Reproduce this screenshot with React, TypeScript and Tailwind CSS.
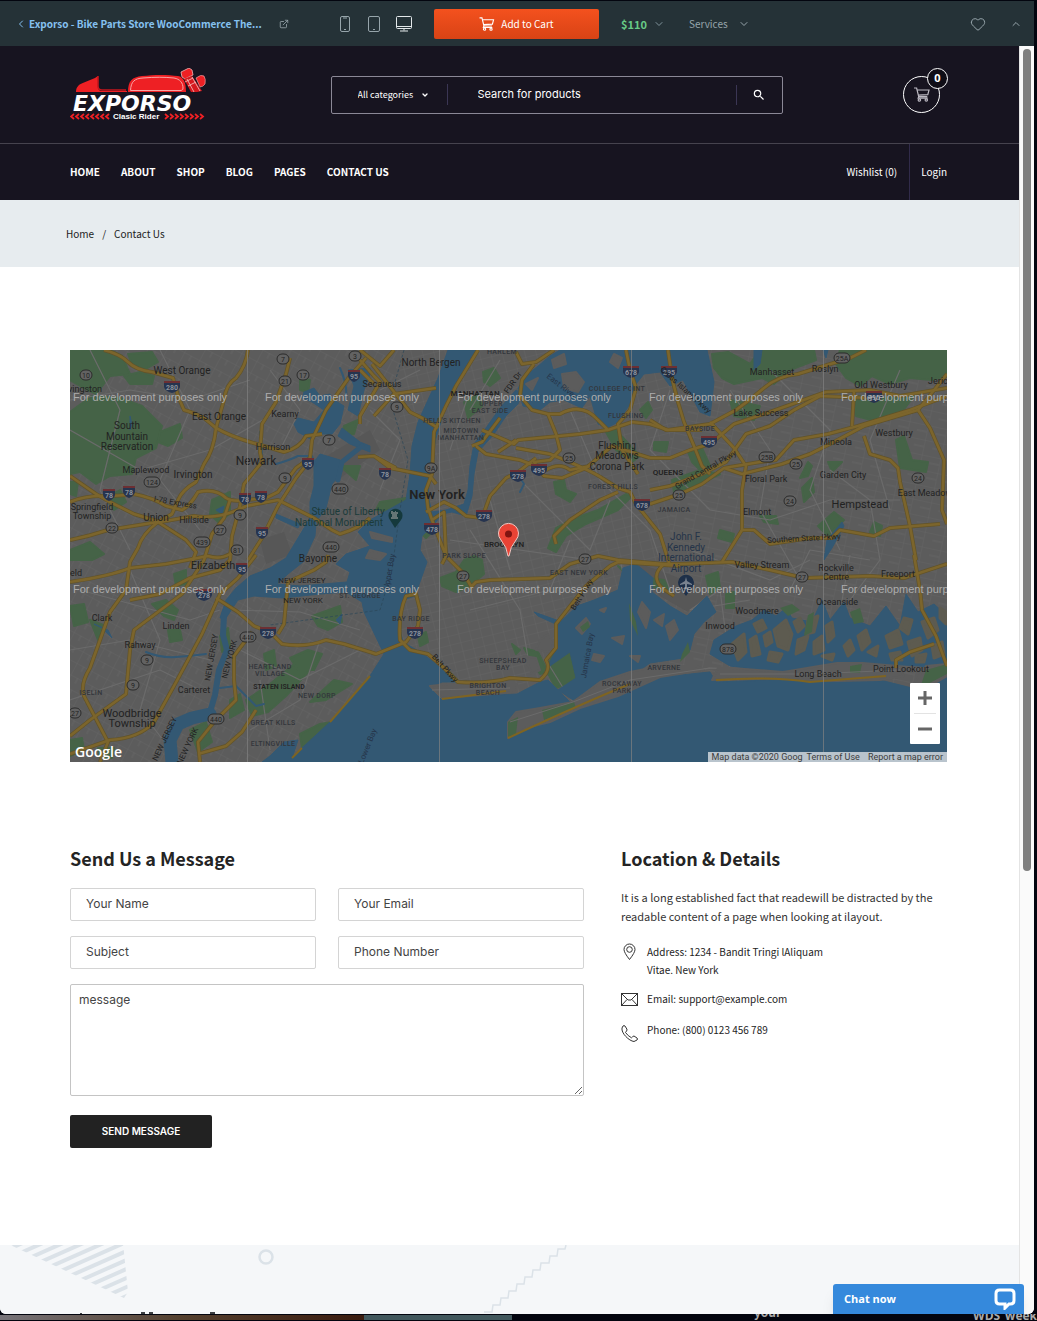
import React from "react";
import { ChevronDown, ChevronLeft, ChevronUp, ExternalLink, Heart } from "lucide-react";
import { MdSearch } from "react-icons/md";

/* ---------- icons ---------- */

function CartIcon({ className }: { className?: string }) {
  return (
    <svg viewBox="0 0 16 15" className={className} fill="none" stroke="currentColor" strokeWidth="1.2" aria-hidden="true">
      <path d="M0 1h2.6l2.1 8.6h8.6M3.1 3h11.9l-1.2 4.6-9.5.6M4.7 9.6l-.6 1.6h9.6" />
      <circle cx="5.4" cy="13" r="1.2" />
      <circle cx="12.3" cy="13" r="1.2" />
    </svg>
  );
}

function Logo() {
  return (
    <svg viewBox="0 0 136 53" className="h-[53px] w-[136px]" role="img" aria-label="Exporso Clasic Rider">
      <path d="M6 24c0-5 3-8 8-9.500L25 10l3-2v10c0 3 1 5 4 5h25v1z" fill="#ee2024" />
      <path d="M28 8v10c0 3 1 4 4 4h24" fill="none" stroke="#c4161c" strokeWidth="1.6" />
      <path d="M58 24c0-11 4-15 14-16 12-1.500 26-1.500 36 0 6 1 8 7 8 16z" fill="#ee2024" />
      <path d="M60.500 22.500c.5-9 4-12 12.500-12.500 11-1 22-1 31 0 6 1 9 5 9 10 0 2-1 2.500-3 2.500z" fill="none" stroke="#f8a5a5" strokeWidth="1" />
      <path d="M111 4l8-4 3 2 1 5-8 4-3-2z" fill="#ee2024" stroke="#f3b6b6" strokeWidth=".8" />
      <path d="M114 11l8-3 10 15-5 1h-6z" fill="#d4191f" />
      <path d="M115 14l8-4M118 18l8-4M117 11l7 13M122 9l8 14" stroke="#f6c4c4" strokeWidth=".8" />
      <path d="M126 10q5-4 8-2 2 3 1 8-2 3-5 3z" fill="#ee2024" stroke="#f3b6b6" strokeWidth=".6" />
      <text x="3" y="43" fill="#fff" fontFamily="DejaVu Sans, sans-serif" fontWeight="700" fontStyle="italic" fontSize="22">EXPORSO</text>
      <g fill="none" stroke="#ee2024" strokeWidth="1.8">
        {[0, 5, 10, 15, 20, 25, 30, 35].map((x) => (
          <path key={x} d={`M${x + 4} 46l-3 2.500 3 2.500`} />
        ))}
        {[95, 100, 105, 110, 115, 120, 125, 130].map((x) => (
          <path key={x} d={`M${x} 46l3 2.500-3 2.500`} />
        ))}
      </g>
      <text x="43" y="51" fill="#fff" fontFamily="Liberation Sans, sans-serif" fontWeight="700" fontSize="8">Clasic Rider</text>
    </svg>
  );
}

/* ---------- map ---------- */

const greens = [
  "0,0 40,0 52,6 60,24 40,26 26,44 10,36 0,30",
  "0,62 22,46 50,48 72,56 92,76 86,98 66,108 62,124 40,126 26,134 10,122 0,124",
  "58,4 82,2 88,12 74,20 62,14", "70,22 84,26 82,34 60,34 54,26",
  "90,82 110,74 112,88 98,96 88,92", "0,200 20,192 34,204 22,210 0,210",
  "36,148 50,140 56,152 44,160", "142,150 160,142 160,164 148,172 140,164",
  "274,76 288,70 284,84 272,86", "270,116 290,116 286,130",
  "413,22 424,18 430,28 420,36 414,32", "394,52 408,44 412,56 398,68",
  "310,152 336,148 330,162 306,160", "345,178 356,172 364,180 356,188",
  "478,198 486,178 500,170 528,160 556,144 562,146 548,160 516,174 496,186 486,202",
  "536,82 544,78 570,106 562,112 546,100", "570,60 578,52 582,60 576,68",
  "484,132 494,130 496,140 506,144 500,152 486,144",
  "370,228 386,222 394,210 404,206 412,210 414,224 400,236 386,242 372,236",
  "642,4 658,2 680,14 690,0 744,0 746,10 720,20 704,34 692,28 664,34 652,28 644,18",
  "770,0 877,0 877,26 862,30 840,28 820,34 802,26 790,36 776,28 766,14",
  "784,46 812,48 844,46 832,62 808,72 786,66", "618,102 632,98 640,116 634,124 622,112",
  "602,130 630,120 650,124 622,138 604,142", "826,90 834,86 842,110 858,112 856,122 830,118",
  "732,138 742,128 744,142 734,152", "758,112 772,112 762,122", "584,92 598,92 596,102 584,100",
  "650,180 664,184 662,192 648,188", "690,166 706,166 708,174 694,172",
  "748,176 764,162 774,170 758,186", "804,172 812,176 810,186 800,182",
  "636,226 648,222 650,238 640,244", "656,244 664,242 664,258 656,258",
  "483,305 500,300 507,330 486,338 476,320", "348,286 356,282 358,292 350,296",
  "442,294 450,300 446,304", "454,298 468,302 478,322 470,324",
  "82,254 96,250 108,260 104,270 94,266", "150,286 158,278 160,296 152,302",
  "194,304 204,300 206,316 196,320", "200,334 234,306 242,318 216,346 198,362 182,366 176,350",
  "220,308 238,300 252,304 244,320 228,320", "230,384 250,374 262,372 232,398",
  "242,266 270,256 272,272 258,280 248,276", "240,352 264,330 282,334 256,350",
  "160,350 170,344 174,360 160,368", "104,224 116,220 116,234 106,236",
  "20,270 36,276 28,290", "98,280 110,280 112,290 100,292", "120,380 136,372 142,392 128,402",
  "0,256 14,254 18,272 4,276", "0,390 12,388 14,400 0,406", "28,398 44,398 42,408 30,408",
  "548,216 566,234 600,240 594,230 562,226", "660,50 690,56 684,70 664,66", "730,128 738,112 742,116 738,126", "0,132 8,132 6,146 0,144", "230,28 240,30 238,42 230,40",
];

const waters = [
  // Hudson, upper bay, lower bay and the Atlantic
  "378,0 368,28 358,50 348,72 342,96 340,124 336,150 318,160 300,170 288,182 300,196 276,204 266,214 280,222 277,232 230,236 207,234 218,224 233,212 245,186 246,172 256,158 262,134 272,122 270,110 250,104 244,112 244,136 240,152 240,168 228,188 216,208 200,218 180,226 166,238 156,250 150,268 156,268 168,250 184,246 213,248 250,244 276,242 292,252 294,262 314,304 300,326 260,372 232,398 222,408 228,390 214,392 200,406 192,412 877,412 877,322 850,340 810,330 760,332 700,330 646,332 640,322 580,328 510,358 500,352 486,338 478,330 470,332 447,344 400,346 372,350 360,338 372,332 387,332 372,318 350,302 333,292 328,272 333,250 345,246 357,212 350,200 352,186 366,172 372,164 382,162 396,166 402,146 404,124 408,102 424,84 436,66 448,54 452,44 446,40 430,58 416,78 404,94 400,116 398,140 394,154 376,160 362,162 358,146 360,120 366,88 374,62 388,34 400,10 408,0",
  // upper East River
  "453,56 448,38 458,24 467,17 480,6 490,0 637,0 644,32 640,66 630,62 613,30 600,36 590,22 574,24 566,34 560,54 548,72 537,78 528,74 520,46 512,58 494,50 480,52 470,60",
  // Jamaica Bay
  "477,318 486,300 487,275 507,256 524,250 548,240 553,218 566,214 583,228 582,242 600,256 617,266 637,246 646,262 634,272 624,284 620,300 613,308 580,313 562,326 523,338 503,350 488,340 506,328 500,302",
  // South Shore channels
  "660,316 640,304 644,290 666,276 682,270 694,260 706,266 716,258 722,268 742,272 752,250 760,270 774,252 780,268 800,276 816,256 830,276 836,244 848,262 864,254 877,266 877,322 850,316 800,313 700,322",
  "234,42 244,38 250,46 260,44 264,50 274,56 270,74 262,84 248,84 242,90 228,82 224,74 228,68 244,72 254,60 242,52 232,48",
  "278,20 284,36 278,60 288,66 294,40 300,24 300,18", "272,78 290,92 300,96 300,102 280,94 268,86",
  "684,0 692,0 690,14 684,20", "753,0 758,0 756,8", "60,66 62,74 60,80", "146,160 154,156 152,164",
  "206,164 230,174 228,178 206,168", "24,274 32,278 42,288 38,280", "757,190 772,172 774,176 762,198 754,210", "464,262 492,272 490,276 468,266",
  "266,270 272,264 270,274",
];

const lands = [
  "438,388 438,372 446,362 470,358 503,352 530,332 560,322 590,316 626,316 634,320 590,327 548,346 510,358 480,372 456,378",
  "642,330 648,318 662,318 713,322 767,313 793,313 827,316 834,326 810,330 767,331 723,329 668,328",
  "856,316 877,314 877,326 860,336 842,344 842,336",
  "360,336 378,334 412,334 447,334 446,342 400,346 373,348",
  "492,24 506,22 514,32 508,42 494,38", "544,4 552,8 548,18 540,12", "456,34 468,28 462,40", "482,10 494,4 496,14 484,18",
  "506,278 516,268 520,274 512,284", "524,304 534,306 530,312 522,310", "542,288 554,286 552,294", "560,306 570,306 568,312", "530,260 536,258 534,262", "596,276 604,270 608,280 600,290", "470,290 478,284 484,292 480,302 466,300", "454,306 466,308 470,320 462,324",
  "572,252 580,262 576,278 568,262", "584,270 594,264 592,276",
  "300,182 322,188 322,192 302,188", "300,200 316,204 310,210 296,208",
];

const marsh = [
  "704,280 716,270 722,284 718,300 708,296", "694,286 700,282 702,292 696,296", "724,272 730,268 734,276 728,282", "728,290 738,286 734,300 726,304",
  "738,270 748,266 744,282 736,284", "744,292 752,286 754,300 744,304", "756,276 762,272 764,286 758,292", "774,296 780,290 784,300 778,306",
  "788,286 796,280 800,292 792,300", "798,302 808,296 806,306", "816,286 828,280 832,294 820,298", "834,268 842,270 838,284 830,278",
  "838,292 850,288 852,300 842,306", "852,272 864,268 868,280 858,288", "862,296 872,292 874,304 864,308", "846,306 856,304 854,312 846,312",
  "820,304 830,302 832,310 822,310", "680,290 686,286 690,304 682,306", "752,306 764,304 762,310", "700,302 712,304 708,312 698,310", "870,258 876,262 876,274 870,268",
  "662,294 674,284 676,302 668,310", "684,274 692,270 696,278 688,282",
];

const highways = [
  "M34 0Q50 4 58 12T82 22L103 28L108 46L114 60Q122 62 134 68L146 78Q160 86 180 92L214 102Q230 98 236 86L252 84",
  "M178 0Q176 16 166 28Q156 34 154 50L146 78Q144 100 134 114L126 132Q112 140 108 150L102 164L88 172Q72 184 68 198L60 212L56 240L40 262Q30 290 20 318Q10 334 14 346L38 392L30 412",
  "M0 152Q14 146 32 146T64 144Q84 148 96 156L112 160Q120 156 128 142Q146 138 156 148Q162 152 176 150L196 148L208 142L226 118L240 108L242 90L256 60L280 26L296 8",
  "M0 126L26 144L40 152L64 164L90 172L124 166Q150 170 176 156L208 150L244 168L262 180L270 184Q290 178 300 168",
  "M0 190Q20 186 38 180L88 172L116 190L126 202L120 218",
  "M178 210L192 188L208 156L226 128L240 110",
  "M160 150L154 168L142 184L134 210L112 244L64 280L60 300L56 344L20 370L0 386",
  "M186 205L168 228L150 244L132 284L104 336L84 372Q70 388 40 390L0 404",
  "M220 8L216 24L206 52L192 74L190 102L192 112L174 134L170 156L162 186L160 210L150 220L120 228L90 244L60 250",
  "M0 232Q40 226 60 218L96 214L138 206Q150 210 160 204",
  "M146 248L168 262L184 276L200 282L212 294Q236 298 256 290L274 294L300 302L306 304L336 292L348 276L350 260L346 244L336 246Q328 264 330 290L340 300L358 304L374 318L388 332Q420 334 440 328L470 330Q482 320 476 310L486 298L486 274L516 236L540 216L548 212L610 216",
  "M258 205L256 212L244 220L218 232L214 274L208 284",
  "M182 282L164 306L164 330L166 350L144 372L128 392L130 412M128 404L156 396L172 382L186 360",
  "M290 10L304 26L310 32L290 66L290 74M302 14L340 62L352 68L368 78M290 0L310 16L324 0",
  "M408 0L386 36L376 56L364 82L362 124L356 140L358 158L362 170L376 206L372 214M356 162L374 152L386 158L396 166L412 168L420 146L436 128L448 122L466 108M362 170L374 162L376 206",
  "M446 2L452 14L466 12L484 0M464 14L452 30L450 46L462 60L478 64L490 64Q512 52 528 70L538 80L562 72L580 74L598 80L640 74L666 60Q680 50 694 38T728 24L780 8L796 0",
  "M288 107L304 106L320 118L360 126L366 134M304 106L326 118M304 66L324 44L366 38",
  "M402 96L412 92L430 68M406 96L416 104L450 110L476 120Q490 112 500 120L520 116M412 80L444 94L448 90L510 84L538 80M428 102L446 90M446 98L480 104Q520 120 532 128L548 138L560 142L566 154L590 184L600 216",
  "M478 64L486 84L490 100L480 110L464 112L474 126L492 128L516 118L542 96L580 108",
  "M548 142L530 150L500 170L484 186L486 194",
  "M580 108L600 108L620 100L640 94L664 74L700 62L756 42L800 40L830 46L877 38",
  "M598 0L602 28L608 52L614 72L624 96L632 116L640 124",
  "M640 72L664 98L676 116L672 140L672 180L652 212",
  "M580 140L600 136L632 124L656 112L676 84L700 76L724 60L750 46L800 48M580 154L610 144L632 134L654 118L690 112L706 110L724 90L758 84L788 76L840 60L877 46",
  "M654 118L672 124L712 114L740 104L760 94L794 76L848 60L877 24M784 42L782 76M794 86L800 104L820 110L828 118L830 132L840 176L846 210",
  "M672 180L684 180L700 194L740 188L762 188L770 180L804 186L820 178L870 174M848 60L860 78L874 110L872 160L877 174",
  "M400 238L406 232L420 230L480 228L500 214L528 206L548 210L594 214M378 208L394 224L402 238M594 214Q580 226 592 238L604 246M580 214L610 214L662 212L700 220L734 228L800 226L834 228L877 214",
  "M844 205L850 240L852 260L866 286L877 316M864 294L840 302L826 310L826 318",
  "M556 0L560 20L566 38L560 60L548 74L552 100L568 124M290 20L304 34",
  "M580 70L596 80L632 80",
];

const shore = [
  "M438 388Q520 350 560 334", "M646 330Q700 326 740 332Q790 328 816 326", "M260 372L300 326", "M222 408L232 398", "M372 349L436 341", "M842 345L860 334",
];

const streets = [
  "M0 80L70 120L140 100L210 60M20 0L50 60L30 140L60 200M90 0L120 60L90 130L130 180M200 20L230 60L210 100M0 50L60 40L120 50L180 30",
  "M60 220L90 290L70 360L110 412M0 300L60 290L140 310M10 240L120 270L150 260M0 350L90 320L130 340",
  "M170 300L230 330L290 300M180 380L230 350L250 290M190 330L200 400M160 260L230 262L290 280",
  "M300 60L330 90L310 140M310 40L350 20M400 60L430 10M380 100L400 40",
  "M400 180L450 260L460 320M380 190L520 210M400 260L480 240L500 190M420 150L440 220M450 130L520 200L540 150M500 60L530 130L580 180L600 240",
  "M600 40L580 100L640 160M660 40L700 100L690 160L730 230M700 20L760 80L740 140L770 200M620 200L700 230L740 210",
  "M640 160L700 170L760 150L830 150M760 120L800 150L810 210L780 250M830 20L800 90L820 160M720 240L740 200L800 210M680 250L620 260L650 240L660 317M753 315L770 262L780 205",
  "M551 214L560 252L568 286L572 322M476 310L492 336L503 352M440 372L503 352L560 330L640 318L740 322L830 318",
];

type Label = [x: number, y: number, text: string, size: number, kind?: "area" | "bold" | "blue" | "teal", rotate?: number];

const labels: Label[] = [
  [112, 24, "West Orange", 10], [15, 42, "vingston", 9], [149, 70, "East Orange", 10], [57, 79, "South", 10], [57, 90, "Mountain", 10], [57, 100, "Reservation", 10],
  [76, 123, "Maplewood", 9], [123, 128, "Irvington", 10], [22, 160, "Springfield", 9], [22, 169, "Township", 9], [86, 171, "Union", 10], [124, 173, "Hillside", 9],
  [105, 155, "I-78 Express", 8, undefined, 10], [215, 67, "Kearny", 9], [203, 100, "Harrison", 9], [186, 115, "Newark", 12], [312, 37, "Secaucus", 9], [361, 16, "North Bergen", 10],
  [278, 165, "Statue of Liberty", 10, "teal"], [269, 176, "National Monument", 10, "teal"], [248, 212, "Bayonne", 10], [143, 219, "Elizabeth", 11], [5, 226, "ield", 9],
  [32, 271, "Clark", 9], [106, 279, "Linden", 9], [70, 298, "Rahway", 9], [124, 343, "Carteret", 9], [62, 367, "Woodbridge", 11], [62, 377, "Township", 11],
  [21, 345, "ISELIN", 7, "area"], [144, 308, "NEW JERSEY", 8, undefined, -80], [162, 310, "NEW YORK", 8, undefined, -75], [97, 390, "NEW JERSEY", 8, undefined, -65], [120, 397, "NEW YORK", 8, undefined, -65],
  [232, 233, "NEW JERSEY", 8], [233, 253, "NEW YORK", 8], [290, 248, "ST. GEORGE", 7, "area"], [200, 319, "HEARTLAND", 7, "area"], [200, 326, "VILLAGE", 7, "area"],
  [209, 339, "STATEN ISLAND", 7, "bold"], [247, 348, "NEW DORP", 7, "area"], [203, 375, "GREAT KILLS", 7, "area"], [203, 396, "ELTINGVILLE", 7, "area"],
  [367, 149, "New York", 13, "bold"], [405, 46, "MANHATTAN", 8, "bold"], [421, 56, "UPPER", 7, "area"], [420, 63, "EAST SIDE", 7, "area"], [432, 4, "HARLEM", 7, "area"],
  [382, 73, "HELL'S KITCHEN", 7, "area"], [391, 83, "MIDTOWN", 7, "area"], [391, 90, "MANHATTAN", 7, "area"], [445, 34, "FDR Dr", 8, undefined, -55], [490, 38, "East River", 8, "blue", 38],
  [434, 197, "BROOKLYN", 8, "bold"], [394, 208, "PARK SLOPE", 7, "area"], [509, 225, "EAST NEW YORK", 7, "area"], [341, 271, "BAY RIDGE", 7, "area"], [433, 313, "SHEEPSHEAD", 7, "area"], [433, 320, "BAY", 7, "area"],
  [418, 338, "BRIGHTON", 7, "area"], [418, 345, "BEACH", 7, "area"], [552, 336, "ROCKAWAY", 7, "area"], [552, 343, "PARK", 7, "area"], [594, 320, "ARVERNE", 7, "area"],
  [373, 320, "Belt Pkwy", 8, undefined, 48], [514, 246, "Belt Pkwy", 8, undefined, -58], [520, 306, "Jamaica Bay", 8, "blue", -80], [322, 222, "Upper Bay", 8, "blue", -80], [300, 397, "Lower Bay", 8, "blue", -68],
  [547, 41, "COLLEGE POINT", 7, "area"], [556, 68, "FLUSHING", 7, "area"], [547, 99, "Flushing", 10], [547, 109, "Meadows", 10], [547, 120, "Corona Park", 10], [543, 139, "FOREST HILLS", 7, "area"],
  [598, 125, "QUEENS", 8, "bold"], [604, 162, "JAMAICA", 7, "area"], [630, 81, "BAYSIDE", 7, "area"], [702, 25, "Manhasset", 9], [755, 22, "Roslyn", 9], [811, 38, "Old Westbury", 9], [873, 34, "Jericho", 9],
  [691, 66, "Lake Success", 9], [824, 86, "Westbury", 9], [766, 95, "Mineola", 9], [696, 132, "Floral Park", 9], [773, 128, "Garden City", 9], [687, 165, "Elmont", 9], [790, 158, "Hempstead", 11], [855, 146, "East Meadow", 9],
  [637, 122, "Grand Central Pkwy", 8, undefined, -30], [614, 42, "Cross Island Pkwy", 8, undefined, 42], [734, 191, "Southern State Pkwy", 8, undefined, -3],
  [616, 190, "John F.", 10, "blue"], [616, 201, "Kennedy", 10, "blue"], [616, 211, "International", 10, "blue"], [616, 222, "Airport", 10, "blue"],
  [692, 218, "Valley Stream", 9], [766, 221, "Rockville", 9], [766, 230, "Centre", 9], [828, 227, "Freeport", 9], [767, 255, "Oceanside", 9], [687, 264, "Woodmere", 9], [650, 279, "Inwood", 9], [748, 327, "Long Beach", 9], [831, 322, "Point Lookout", 9],
];

const routes: [number, number, string][] = [
  [16, 25, "10"], [213, 9, "7"], [285, 6, "3"], [233, 25, "17"], [215, 31, "21"], [259, 90, "7"], [82, 132, "124"], [215, 128, "9"], [270, 139, "440"], [42, 178, "22"], [170, 165, "9"], [150, 180, "27"], [132, 192, "439"], [167, 200, "81"],
  [261, 197, "440"], [327, 57, "9"], [361, 118, "9A"], [499, 108, "25"], [515, 209, "27"], [393, 226, "27"], [772, 8, "25A"], [697, 107, "25B"], [726, 114, "25"], [609, 145, "25"], [720, 151, "24"], [848, 128, "24"], [732, 227, "27"],
  [658, 299, "878"], [77, 310, "9"], [63, 335, "9"], [5, 363, "27"], [146, 369, "440"], [178, 287, "440"],
];

const interstates: [number, number, string][] = [
  [102, 36, "280"], [284, 25, "95"], [238, 113, "95"], [39, 144, "78"], [59, 141, "78"], [175, 148, "78"], [191, 146, "78"], [192, 182, "95"], [315, 123, "78"], [362, 178, "478"], [414, 165, "278"], [448, 125, "278"], [469, 119, "495"],
  [561, 21, "678"], [572, 154, "678"], [599, 21, "295"], [639, 91, "495"], [804, 46, "495"], [172, 218, "95"], [134, 244, "278"], [198, 282, "278"], [345, 282, "278"],
];

function labelColor(kind: Label[4]) {
  if (kind === "area") return "#33363b";
  if (kind === "blue") return "#253449";
  if (kind === "teal") return "#1b3b3a";
  return "#222";
}

function MapDrawing() {
  return (
    <svg viewBox="0 0 877 412" preserveAspectRatio="xMidYMid slice" className="block h-full w-full" role="img" aria-label="Map of New York" fontFamily="Roboto, sans-serif">
      <defs>
        <pattern id="gridA" width="17" height="13" patternUnits="userSpaceOnUse" patternTransform="rotate(28)">
          <path d="M0 0H17M0 0V13M8 0V6" stroke="#666" strokeWidth="0.8" fill="none" />
        </pattern>
        <pattern id="gridB" width="11" height="9" patternUnits="userSpaceOnUse" patternTransform="rotate(-14)">
          <path d="M0 0H11M0 0V9" stroke="#666" strokeWidth="0.8" fill="none" />
        </pattern>
        <pattern id="gridC" width="19" height="15" patternUnits="userSpaceOnUse" patternTransform="rotate(12)">
          <path d="M0 0H19M0 0V15M9 7H19" stroke="#666" strokeWidth="0.8" fill="none" />
        </pattern>
      </defs>
      <rect width="877" height="412" fill="#5c5c5c" />
      <rect width="330" height="412" fill="url(#gridA)" />
      <rect x="330" width="270" height="412" fill="url(#gridB)" />
      <rect x="600" width="277" height="412" fill="url(#gridC)" />
      <path d="M240 116L300 80L310 100L262 134ZM190 190L214 182L222 204L196 214ZM566 212L620 232L636 246L618 262L590 246Z" fill="#575757" />
      <g fill="#456347" stroke="#456347" strokeWidth="2" strokeLinejoin="round">{greens.map((p) => <polygon key={p} points={p} />)}</g>
      <g fill="none" stroke="#6b6b6b" strokeWidth="1.2" strokeLinejoin="round">{streets.map((d) => <path key={d} d={d} />)}</g>
      <g fill="#335873" stroke="#335873" strokeLinejoin="round">{waters.map((p) => <polygon key={p} points={p} />)}</g>
      <g fill="none" stroke="#335873" strokeLinejoin="round" strokeLinecap="round">
        <path d="M165 245L154 265L153 285L157 300L149 320L145 345L140 362" strokeWidth="6" />
        <path d="M140 364L122 368L108 374L100 390L102 412" strokeWidth="13" />
        <path d="M76 302Q90 308 106 307T136 304M150 338L166 336L178 348L186 356L194 354M192 104L190 82M206 114Q220 110 228 106L242 106L246 116M270 18Q278 36 276 50M446 122L454 134L450 142" strokeWidth="2" />
        <path d="M292 96L272 112L268 130" strokeWidth="5" />
      </g>
      <g fill="#5c5c5c" stroke="#5c5c5c" strokeWidth="2" strokeLinejoin="round">{lands.map((p) => <polygon key={p} points={p} />)}</g>
      <g fill="#5d5b50" stroke="#5d5b50" strokeWidth="3" strokeLinejoin="round">{marsh.map((p) => <polygon key={p} points={p} />)}</g>
      <path d="M438 388L438 372L448 367L446 384ZM472 360L504 352L506 358L474 370ZM510 277L518 271L520 277L513 282ZM559 253L566 272L568 286L560 270ZM612 304L618 292L620 302L610 312ZM780 316L792 314L790 323L780 323ZM856 320L877 314L877 324L850 338ZM710 258L722 254L730 260L718 266ZM738 265L744 262L742 282L734 286ZM780 262L790 258L794 272L784 274Z" fill="#456347" />
      <path d="M334 0L320 50L338 110L330 160L322 220L310 260L200 275" fill="none" stroke="#2b4658" strokeWidth="0.7" strokeDasharray="3 2" />
      <path d="M440 372L503 352L560 330L640 318M650 324L740 324L830 320M362 340L440 338" fill="none" stroke="#6b6b6b" />
      <g fill="none" stroke="#7e6422" strokeWidth="2">{shore.map((d) => <path key={d} d={d} />)}</g>
      <g fill="none" stroke="#625329" strokeWidth="4" strokeLinejoin="round">{highways.map((d) => <path key={d} d={d} />)}</g>
      <g fill="none" stroke="#7c652c" strokeWidth="2.6" strokeLinejoin="round">{highways.map((d) => <path key={d} d={d} />)}</g>

      {routes.map(([x, y, t]) => (
        <g key={`${x}-${y}`}>
          <rect x={x - (t.length > 2 ? 8 : 6)} y={y - 5} width={t.length > 2 ? 16 : 12} height="10" rx="5" fill="#626262" stroke="#2b2b2b" />
          <text x={x} y={y + 3} fontSize="7" textAnchor="middle" fill="#222">{t}</text>
        </g>
      ))}
      {interstates.map(([x, y, t]) => {
        const w = t.length > 2 ? 8 : 6;
        return (
          <g key={`${x}-${y}`}>
            <path d={`M${x - w} ${y - 5}H${x + w}V${y + 1}Q${x + w - 1} ${y + 5} ${x} ${y + 7}Q${x - w + 1} ${y + 5} ${x - w} ${y + 1}Z`} fill="#26344f" />
            <path d={`M${x - w} ${y - 5}H${x + w}V${y - 3}H${x - w}Z`} fill="#6c2f33" />
            <text x={x} y={y + 4} fontSize="7" fontWeight="700" textAnchor="middle" fill="#8c929c">{t}</text>
          </g>
        );
      })}
      {labels.map(([x, y, t, size, kind, rotate]) => (
        <text
          key={`${t}-${x}-${y}`}
          x={x}
          y={y}
          fontSize={size}
          textAnchor="middle"
          fontWeight={kind === "bold" ? 600 : kind === "area" ? 500 : 400}
          fill={labelColor(kind)}
          transform={rotate ? `rotate(${rotate} ${x} ${y})` : undefined}
          className={kind === "area" ? "tracking-wider" : undefined}
        >
          {t}
        </text>
      ))}

      <path d="M325 178L320 170A7 7 0 1 1 331 170Z" fill="#15393c" />
      <path d="M322 161h1v1h2v-1h1v1h2v-1v3h-1v3h1v2h-7v-2h1v-3h-1v-3z" fill="#657575" />
      <path d="M616 246L610 238A8 8 0 1 1 622 238Z" fill="#1e3049" />
      <path d="M616 227l1 4 5 3v1l-5-1v3l2 2h-6l2-2v-3l-5 1v-1l5-3z" fill="#79828f" />

      <g fill="#828282">
        {[177, 369, 561, 753].map((x) => <rect key={x} x={x} width="1" height="412" fillOpacity="0.7" />)}
      </g>
      <g fontFamily="Liberation Sans, sans-serif" fontSize="11" fill="#adadad">
        {[3, 195, 387, 579, 771].map((x) => (
          <React.Fragment key={x}>
            <text x={x} y="51">For development purposes only</text>
            <text x={x} y="243">For development purposes only</text>
          </React.Fragment>
        ))}
      </g>
      <path d="M438 206Q437 197 431 190A10 10 0 1 1 446 190Q440 197 439 206Z" fill="#ea4335" stroke="#f6c7c1" strokeWidth="1" />
      <circle cx="438.500" cy="184" r="3.500" fill="#811411" />
    </svg>
  );
}

function MapPanel() {
  return (
    <section className="relative h-[412px] overflow-hidden" aria-label="Store location">
      <MapDrawing />
      <span className="absolute bottom-0 left-[5px] font-['Open_Sans',sans-serif] text-[14px] font-semibold leading-5 text-white">Google</span>
      <div className="absolute bottom-[18px] right-[7px] flex w-[30px] flex-col items-center rounded-[1px] bg-white">
        <button aria-label="Zoom in" className="flex h-[30px] w-full items-center justify-center">
          <svg viewBox="0 0 14 14" className="size-3.5"><path d="M7 0V14M0 7H14" stroke="#666" strokeWidth="3" /></svg>
        </button>
        <span className="h-px w-[22px] bg-[#e3e3e3]" />
        <button aria-label="Zoom out" className="flex h-[30px] w-full items-center justify-center">
          <svg viewBox="0 0 14 14" className="size-3.5"><path d="M0 7H14" stroke="#666" strokeWidth="3" /></svg>
        </button>
      </div>
      <div className="absolute bottom-0 right-0 flex h-[10px] items-center gap-1 overflow-hidden bg-[#b9c4cd] px-1 font-[Roboto,sans-serif] text-[9px] leading-[10px] text-[#3c3c3c]">
        <span>Map data ©2020 Goog</span>
        <a href="#terms">Terms of Use</a>
        <a href="#report" className="ml-1">Report a map error</a>
      </div>
    </section>
  );
}

/* ---------- page parts ---------- */

function PreviewBar() {
  return (
    <div className="flex h-[45px] items-center bg-[#253237] pl-[17px] pr-3 text-[10px] leading-4 text-[#97a5ab]">
      <a href="#back" className="flex w-[254px] items-center font-bold text-[#85c1f0]">
        <ChevronLeft className="-ml-0.5 mr-0.5 size-3 shrink-0" strokeWidth={2} />
        <span className="whitespace-nowrap">Exporso - Bike Parts Store WooCommerce The...</span>
      </a>
      <a href="#open" aria-label="Open in new window" className="ml-2"><ExternalLink className="size-[10px]" /></a>
      <div className="ml-[51px] flex items-center gap-[18px]">
        <button aria-label="Phone preview">
          <svg viewBox="0 0 10 16" className="block h-4 w-[10px]" fill="none" stroke="currentColor"><rect x=".5" y=".5" width="9" height="15" rx="1.500" /><path d="M3 2h4M4 13.500h2" /></svg>
        </button>
        <button aria-label="Tablet preview">
          <svg viewBox="0 0 12 16" className="block h-4 w-3" fill="none" stroke="currentColor"><rect x=".5" y=".5" width="11" height="15" rx="1.500" /><path d="M5 13.500h2" /></svg>
        </button>
        <button aria-label="Desktop preview" className="-ml-0.5 text-[#e3e8ea]">
          <svg viewBox="0 0 16 16" className="block size-4" fill="none" stroke="currentColor"><rect x=".5" y=".5" width="15" height="12" rx="1" /><path d="M1 10.500h14M8 12.500v2M4 15h8" /></svg>
        </button>
      </div>
      <button className="ml-[22px] flex h-[30px] w-[165px] items-center justify-center gap-1.5 rounded-[2px] bg-linear-to-b from-[#f4511e] to-[#d84315] text-white">
        <CartIcon className="h-[14px] w-4" />
        <span className="whitespace-nowrap">Add to Cart</span>
      </button>
      <button className="ml-[22px] flex items-center gap-1.5 text-[11px] font-bold text-[#68ca86]">
        $110 <ChevronDown className="size-3 text-[#81949c]" />
      </button>
      <button className="ml-6 flex items-center gap-2.5">
        Services <ChevronDown className="size-3" />
      </button>
      <div className="ml-auto flex items-center gap-6">
        <button aria-label="Add to favourites"><Heart className="block size-4" strokeWidth={1.5} /></button>
        <button aria-label="Collapse bar"><ChevronUp className="block size-3" /></button>
      </div>
    </div>
  );
}

function SiteHeader() {
  const links = ["HOME", "ABOUT", "SHOP", "BLOG", "PAGES", "CONTACT US"];
  return (
    <header className="bg-[#171420] text-white">
      <div className="flex h-[97px] items-center justify-between pl-[70px] pr-[71px]">
        <a href="#home" className="shrink-0"><Logo /></a>
        <form className="ml-1 flex h-[38px] w-[452px] items-center rounded-[2px] border border-[#8b8896]" role="search" onSubmit={(e) => e.preventDefault()}>
          <div className="flex h-[21px] w-[116px] items-center border-r border-[#3b3654] pl-[26px]">
            <select aria-label="Category" className="w-[63px] appearance-none bg-transparent text-[9px] leading-4 outline-none">
              <option>All categories</option>
            </select>
            <ChevronDown className="size-2" strokeWidth={4} />
          </div>
          <input aria-label="Search for products" placeholder="Search for products" className="min-w-0 flex-1 bg-transparent pl-[30px] font-[Inter,sans-serif] text-[11px] outline-none placeholder:text-white" />
          <button aria-label="Search" className="flex h-5 w-[46px] items-center justify-center border-l border-[#3b3654]">
            <MdSearch className="size-[14px]" />
          </button>
        </form>
        <a href="#cart" aria-label="Cart, 0 items" className="relative mr-2 flex size-[37px] items-center justify-center rounded-full border border-white">
          <CartIcon className="h-[15px] w-4 text-[#bcb9c2]" />
          <span className="absolute -right-[9px] -top-[9px] flex size-[21px] items-center justify-center rounded-full border border-white bg-[#0f0d16] font-['Open_Sans',sans-serif] text-[11px] font-bold">0</span>
        </a>
      </div>
      <div className="flex h-[57px] items-center justify-between border-t border-[#46434e] pl-[70px] pr-[72px]">
        <nav className="flex gap-[21px] whitespace-nowrap text-[10px] font-bold leading-4">
          {links.map((l) => <a key={l} href="#nav">{l}</a>)}
        </nav>
        <div className="flex h-full items-center text-[10px] leading-4">
          <a href="#wishlist" className="flex h-full items-center border-r border-[#312b4a] pr-3">Wishlist (0)</a>
          <a href="#login" className="pl-[11px]">Login</a>
        </div>
      </div>
    </header>
  );
}

const fieldClass =
  "h-[33px] w-full min-w-0 rounded-[2px] border border-[#d4d4d4] bg-white px-[15px] pb-0.5 font-[Inter,sans-serif] text-[12px] text-[#333] placeholder:text-[#444]";

function ContactForm() {
  return (
    <section>
      <h2 className="text-[18px] font-bold leading-7 text-[#242424]">Send Us a Message</h2>
      <form className="mt-4 grid grid-cols-2 gap-x-[22px] gap-y-[15px]" onSubmit={(e) => e.preventDefault()}>
        <input aria-label="Your Name" placeholder="Your Name" className={fieldClass} />
        <input aria-label="Your Email" type="email" placeholder="Your Email" className={fieldClass} />
        <input aria-label="Subject" placeholder="Subject" className={fieldClass} />
        <input aria-label="Phone Number" type="tel" placeholder="Phone Number" className={fieldClass} />
        <textarea aria-label="message" placeholder="message" className="col-span-2 block h-[112px] rounded-[2px] border border-[#c4c4c4] bg-white px-2 py-[7px] font-[Inter,sans-serif] text-[12px] leading-4 placeholder:text-[#444]" />
        <button className="mt-1 h-[33px] w-[142px] rounded-[2px] bg-[#222] font-[Inter,sans-serif] text-[10px] font-semibold text-white">SEND MESSAGE</button>
      </form>
    </section>
  );
}

function Details() {
  return (
    <section className="text-[#333]">
      <h2 className="text-[18px] font-bold leading-7 text-[#242424]">Location &amp; Details</h2>
      <p className="mt-4 whitespace-nowrap text-[11px] leading-[19px]">
        It is a long established fact that readewill be distracted by the
        <br />
        readable content of a page when looking at ilayout.
      </p>
      <ul className="mt-[17px] text-[10px] leading-[18px] text-[#242424]">
        <li className="flex gap-[9px]">
          <svg viewBox="0 0 17 17" className="size-[17px] shrink-0" fill="none" stroke="#333"><path d="M8.500 16.500Q3 9.500 3 6.500a5.500 5.500 0 0 1 11 0Q14 9.500 8.500 16.500Z" /><circle cx="8.500" cy="6.500" r="2.800" /></svg>
          <span>Address: 1234 - Bandit Tringi lAliquam<br />Vitae. New York</span>
        </li>
        <li className="mt-[11px] flex gap-[9px]">
          <svg viewBox="0 0 17 17" className="size-[17px] shrink-0" fill="none" stroke="#333"><rect x=".5" y="3.500" width="16" height="12" /><path d="M.5 3.500L7 10h3l6.500-6.500M.5 15.500L6 9.500M16.500 15.500L11 9.500" /></svg>
          <span>Email: support@example.com</span>
        </li>
        <li className="mt-[13px] flex gap-[9px]">
          <svg viewBox="0 0 17 17" className="mt-1 size-[17px] shrink-0" fill="none" stroke="#333" strokeLinejoin="round"><path d="M2 1L1 3C0 8 8 16 13 16.500L16 15q1-1 0-2l-3-2q-1 0-1.500 1l-1 .8Q7 11 4.500 7.500L5.500 6q1-1 .3-2L4 1Q3 .2 2 1Z" /></svg>
          <span>Phone: (800) 0123 456 789</span>
        </li>
      </ul>
    </section>
  );
}

function NextSection() {
  return (
    <section className="relative h-[69px] overflow-hidden bg-[#f5f7f9]" aria-hidden="true">
      <svg viewBox="0 0 600 69" className="absolute left-0 top-0 h-[69px] w-[600px]" fill="none">
        <defs>
          <clipPath id="wedge"><path d="M6 -2H123L128 47L124 53Z" /></clipPath>
        </defs>
        <g clipPath="url(#wedge)" stroke="#dbe2e8" strokeWidth="4">
          {[0, 1, 2, 3, 4, 5, 6, 7, 8, 9, 10, 11].map((i) => (
            <path key={i} d={`M0 ${8 + i * 9}L140 ${-54 + i * 9}`} />
          ))}
        </g>
        <circle cx="266" cy="12" r="6.500" stroke="#dbe2e8" strokeWidth="2.500" />
        <path d="M566 0L565 4H558L557 11H550L549 18H541L540 25H533L532 32H525L524 39H517L516 46H509L508 53H501L500 60H493L492 67H484" stroke="#dbe2e8" strokeWidth="1.500" />
        <path d="M141 67h4v2h-4zM149 67h4v2h-4zM210 67h5v2h-5zM80 68h2v1h-2z" fill="#3c3f43" />
      </svg>
    </section>
  );
}

export default function App() {
  return (
    <div className="min-h-screen bg-[#03050f] pt-px font-['Noto_Sans_CJK_SC',sans-serif]">
      <div className="relative mr-[3px] overflow-hidden rounded-b-[6px] bg-white">
        <PreviewBar />
        <div className="flex">
          <div className="min-w-0 flex-1">
            <SiteHeader />
            <nav aria-label="Breadcrumb" className="flex h-[67px] items-center gap-2 bg-[#e7ecef] pl-[66px] text-[10px] leading-4 text-[#222]">
              <a href="#home">Home</a>
              <span>/</span>
              <span>Contact Us</span>
            </nav>
            <main className="pb-[97px] pl-[70px] pr-[72px] pt-[83px]">
              <MapPanel />
              <div className="mt-[82px] grid grid-cols-[514fr_326fr] gap-x-[37px]">
                <ContactForm />
                <Details />
              </div>
            </main>
            <NextSection />
          </div>
          <div className="w-[15px] border-l border-[#e4e4e4] bg-[#fafafa] px-[3px] pt-[3px]" aria-hidden="true">
            <div className="h-[822px] rounded-full bg-[#7f7f7f]" />
          </div>
        </div>
        <button className="absolute bottom-0 right-[10px] flex h-[30px] w-[191px] items-center justify-between rounded-t-[3px] bg-[#3589dc] pl-[11px] pr-2 font-['Open_Sans',sans-serif] text-[11px] font-bold text-white shadow-lg">
          Chat now
          <svg viewBox="0 0 22 22" className="size-[22px]" fill="none" stroke="currentColor" strokeWidth="3"><path d="M5.500 2h11q3.500 0 3.500 3.500v7q0 3.500-3.500 3.500H15l-4 4V16H5.500Q2 16 2 12.500v-7Q2 2 5.500 2Z" /></svg>
        </button>
      </div>
      <div className="flex h-[6px] items-start overflow-hidden pt-px text-[12px] text-[#aaa]" aria-hidden="true">
        <div className="h-[5px] w-[364px] bg-linear-to-r from-[#77747a] via-[#54402f] to-[#3a1c10]" />
        <div className="h-[5px] w-[148px] bg-[#42585d]" />
        <span className="-mt-1 ml-[242px] font-bold leading-[2px]">your</span>
        <span className="-mt-0.5 ml-auto whitespace-nowrap font-['Open_Sans',sans-serif] font-bold leading-[6px]">WDS_week</span>
      </div>
    </div>
  );
}
